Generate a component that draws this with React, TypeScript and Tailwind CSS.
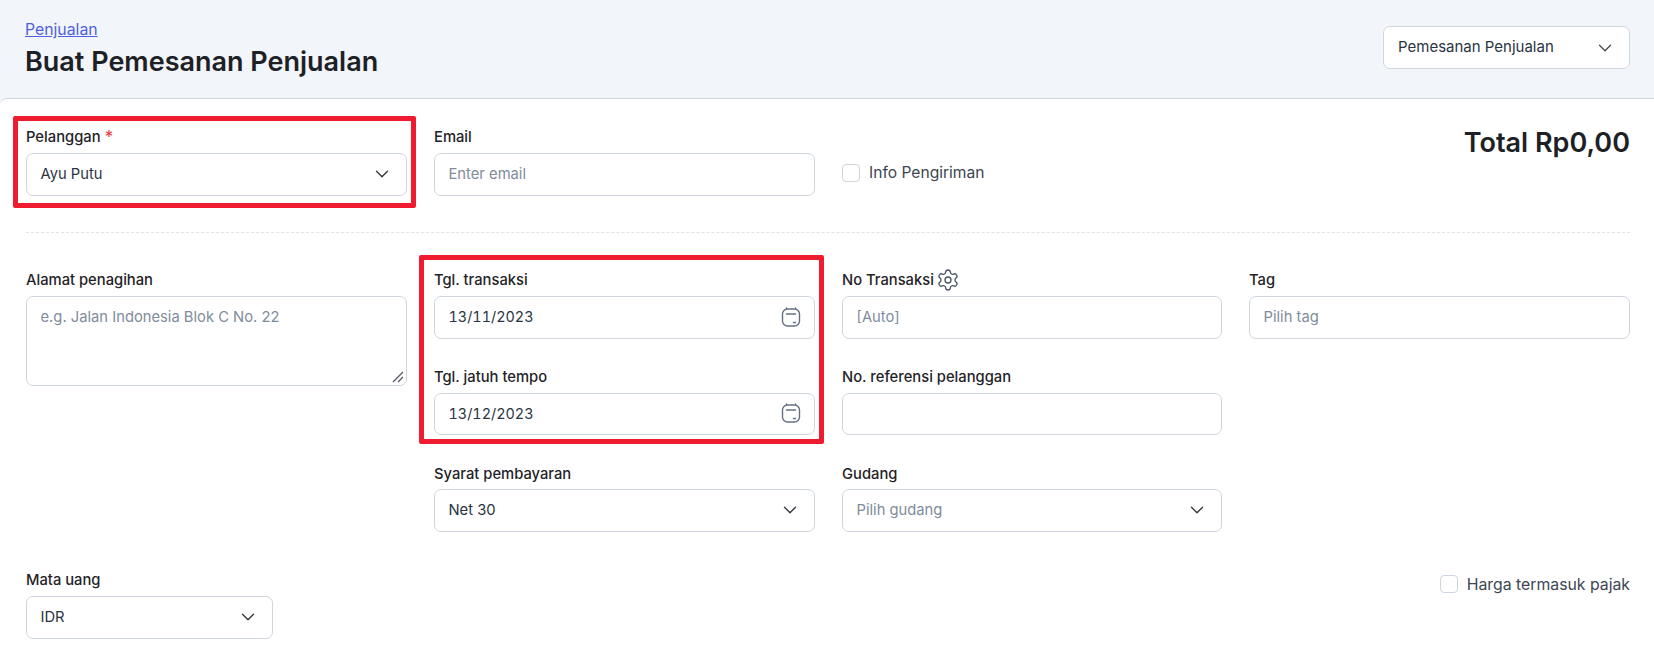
import React from "react";
import { ChevronDown, Settings } from "lucide-react";

const inputBox = "h-[42.5px] w-full rounded-[7px] border border-[#cfd6e0] bg-white flex items-center pl-[13.5px] pr-[13px] text-[14.75px]";
const grid = "grid grid-cols-[381px_381px_380px_381px] gap-x-[27px]";

function Select({ value, placeholder }: { value?: string; placeholder?: string }) {
  return (
    <div className={inputBox + " justify-between"}>
      <span className={value ? "text-[#2a3442]" : "text-[#7f8c9c]"}>{value ?? placeholder}</span>
      <ChevronDown className="w-[22px] h-[22px] text-[#33383f]" strokeWidth={1.5} />
    </div>
  );
}

function TextInput({ value, placeholder }: { value?: string; placeholder?: string }) {
  return (
    <div className={inputBox}>
      <span className={value ? "text-[#2a3442]" : "text-[#7f8c9c]"}>{value ?? placeholder}</span>
    </div>
  );
}

function CalendarIcon() {
  return (
    <svg width="20" height="21" viewBox="0 0 20 21" fill="none" stroke="#667085" strokeWidth="1.4" strokeLinecap="round">
      <rect x="1.5" y="2" width="17" height="17" rx="5" />
      <path d="M5.5 1V2M14.5 1V2M5.5 7H14.5M12.5 15.5H14.5" />
    </svg>
  );
}

function DateInput({ value }: { value: string }) {
  return (
    <div className={inputBox + " justify-between"}>
      <span className="text-[14.4px] text-[#2a3442] tabular-nums">{value}</span>
      <CalendarIcon />
    </div>
  );
}

function Checkbox() {
  return <span className="inline-block w-[18px] h-[18px] rounded-[4px] border border-[#cfd6e0] bg-white shrink-0" />;
}

function Field({ label, children, className = "", low = false }: { label: React.ReactNode; children: React.ReactNode; className?: string; low?: boolean }) {
  const box = low ? "h-[20px] mb-[6px]" : "h-[19px] mb-[7px]";
  return (
    <div className={className}>
      <div className={box + " flex items-end text-[14.75px] font-medium leading-[18px] text-[#1f2328]"}>{label}</div>
      {children}
    </div>
  );
}

export default function App() {
  return (
    <div className="relative w-[1654px] h-[649px] overflow-hidden bg-[#f2f5fa]" style={{ fontFamily: "Inter, 'Noto Sans', sans-serif" }}>
      <header className="h-[98px] flex justify-between pl-[25px] pr-[24px]">
        <div className="pt-[20px]">
          <a className="block text-[15.8px] leading-[19px] text-[#4f60e0] underline">Penjualan</a>
          <h1 className="mt-[7px] text-[27px] leading-[32px] font-semibold text-[#1d2126]">Buat Pemesanan Penjualan</h1>
        </div>
        <div className="pt-[26px]">
          <div className="h-[43px] w-[247px] rounded-[7px] border border-[#cfd6e0] bg-white flex items-center justify-between pl-[14px] pr-[13px] text-[15px] text-[#2a3442]">
            <span>Pemesanan Penjualan</span>
            <ChevronDown className="w-[22px] h-[22px] text-[#4a4f56]" strokeWidth={1.5} />
          </div>
        </div>
      </header>

      <main className="h-[551px] bg-white border-t border-[#cfd6e0] rounded-tl-[7px] pl-[26px] pr-[24px] pt-[28px]">
        <div className={grid}>
          <Field label={<>Pelanggan<span className="ml-[4px] text-[17px] leading-[18px] text-[#e5484d]">*</span></>}>
            <Select value="Ayu Putu" />
          </Field>
          <Field label="Email">
            <TextInput placeholder="Enter email" />
          </Field>
          <div className="flex items-center gap-[9px] pt-[23px]">
            <Checkbox />
            <span className="text-[15.6px] text-[#3d4652]">Info Pengiriman</span>
          </div>
          <div className="text-right text-[27px] leading-[32px] font-semibold text-[#1d2126]">Total Rp0,00</div>
        </div>

        <div className="mt-[36.5px] border-t border-dashed border-[#dfe3e8]" />

        <div className={"mt-[37px] " + grid}>
          <Field label="Alamat penagihan">
            <div className="relative h-[90px] w-full rounded-[7px] border border-[#cfd6e0] pl-[13.5px] pt-[9px] text-[14.75px] text-[#7f8c9c]">
              e.g. Jalan Indonesia Blok C No. 22
              <svg className="absolute right-[1px] bottom-[1px]" width="14" height="14" viewBox="0 0 14 14" stroke="#555b63" strokeWidth="1.3" fill="none">
                <path d="M2 12L12 2M7 12L12 7" />
              </svg>
            </div>
          </Field>
          <div className="flex flex-col gap-[28px]">
            <Field label="Tgl. transaksi"><DateInput value="13/11/2023" /></Field>
            <Field label="Tgl. jatuh tempo"><DateInput value="13/12/2023" /></Field>
            <Field low label="Syarat pembayaran"><Select value="Net 30" /></Field>
          </div>
          <div className="flex flex-col gap-[28px]">
            <Field label={<>No Transaksi<Settings className="ml-[2px] -mb-[3px] w-[24px] h-[24px] text-[#4a5462]" strokeWidth={1.3} /></>}>
              <TextInput placeholder="[Auto]" />
            </Field>
            <Field label="No. referensi pelanggan"><TextInput value="" /></Field>
            <Field low label="Gudang"><Select placeholder="Pilih gudang" /></Field>
          </div>
          <Field label="Tag"><TextInput placeholder="Pilih tag" /></Field>
        </div>

        <div className="mt-[38.5px] flex justify-between">
          <Field label="Mata uang" className="w-[247px]"><Select value="IDR" /></Field>
          <div className="flex items-start gap-[9px] pt-[5px]">
            <Checkbox />
            <span className="text-[15.8px] leading-[20px] text-[#3d4652]">Harga termasuk pajak</span>
          </div>
        </div>
      </main>

      <div className="absolute left-[13px] top-[116px] w-[403px] h-[92px] border-[5px] border-[#ee1c2e] rounded-[2px]" />
      <div className="absolute left-[419px] top-[255px] w-[405px] h-[189px] border-[5px] border-[#ee1c2e] rounded-[2px]" />
    </div>
  );
}
